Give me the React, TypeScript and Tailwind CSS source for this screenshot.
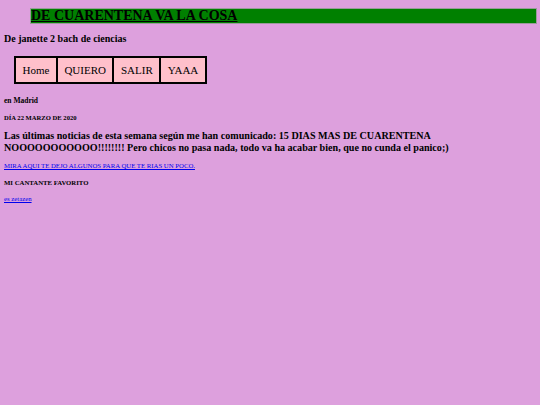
import React from "react";

const serif = { fontFamily: '"Liberation Serif", "Times New Roman", serif' };

export default function App() {
  const nav = ["Home", "QUIERO", "SALIR", "YAAA"];
  return (
    <div className="min-h-[405px] w-full bg-[#dda0dd] text-black pl-[4px] pt-[8px]" style={serif}>
      {/* HEADER */}
      <h1 className="ml-[26px] mr-[3px] h-[16px] bg-[#008000] border border-[#9a9a9a] text-[14px] leading-[14px] font-bold underline">
        DE CUARENTENA VA LA COSA
      </h1>
      <h2 className="mt-[8px] text-[10px] leading-[14px] font-bold">De janette 2 bach de ciencias</h2>

      {/* NAV */}
      <div className="ml-[10px] mt-[10px] inline-flex border border-black">
        {nav.map((n) => (
          <div key={n} className="bg-[#ffc0cb] border border-black h-[26px] px-[6.5px] flex items-center text-[11px]">
            {n}
          </div>
        ))}
      </div>

      <h3 className="mt-[12px] text-[7.5px] leading-[10px] font-bold">en Madrid</h3>
      <h5 className="mt-[8px] text-[6.6px] leading-[8px] font-bold">DÍA 22 MARZO DE 2020</h5>
      <h2 className="mt-[8px] text-[10.1px] leading-[12px] font-bold">
        Las últimas noticias de esta semana según me han comunicado: 15 DIAS MAS DE CUARENTENA NOOOOOOOOOOO!!!!!!!! Pero
        chicos no pasa nada, todo va ha acabar bien, que no cunda el panico;)
      </h2>
      <a href="#" className="block mt-[7px] text-[6.75px] leading-[9px] text-[#0000ee] underline">
        MIRA AQUI TE DEJO ALGUNOS PARA QUE TE RIAS UN POCO.
      </a>
      <h4 className="mt-[8px] text-[6.75px] leading-[9px] font-bold">MI CANTANTE FAVORITO</h4>
      <a href="#" className="block mt-[7px] text-[6.75px] leading-[9px] text-[#0000ee] underline">
        es zetazen
      </a>
    </div>
  );
}
